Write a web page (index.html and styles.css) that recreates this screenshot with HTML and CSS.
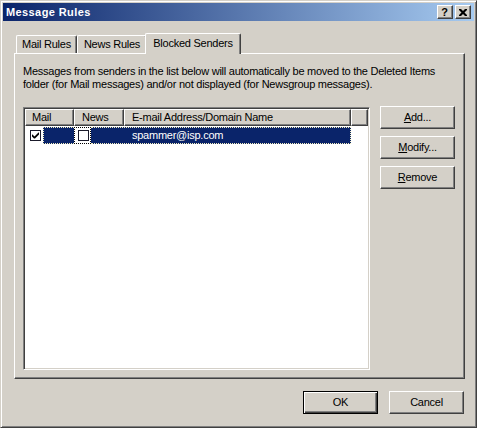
FILE: index.html
```html
<!DOCTYPE html>
<html>
<head>
<meta charset="utf-8">
<title>Message Rules</title>
<link rel="stylesheet" href="styles.css">
</head>
<body>
<div class="window">
  <div class="titlebar">
    <span class="title">Message Rules</span>
    <div class="caption-buttons">
      <div class="cap-btn"><span class="q">?</span></div>
      <div class="cap-btn">
        <svg width="8" height="7" viewBox="0 0 8 7"><path d="M0 0h2l2 2 2-2h2v1L5.5 3.5 8 6v1H6L4 5 2 7H0V6l2.5-2.5L0 1z" fill="#000"/></svg>
      </div>
    </div>
  </div>
  <div class="body">
    <div class="tabs">
      <div class="tab tab-mail">Mail Rules</div>
      <div class="tab tab-news">News Rules</div>
      <div class="tab tab-active">Blocked Senders</div>
    </div>
    <div class="panel">
      <p class="desc">Messages from senders in the list below will automatically be moved to the Deleted Items<br>folder (for Mail messages) and/or not displayed (for Newsgroup messages).</p>
      <div class="panel-main">
        <div class="listview">
          <div class="lv-header">
            <div class="lv-col col-mail">Mail</div>
            <div class="lv-col col-news">News</div>
            <div class="lv-col col-addr">E-mail Address/Domain Name</div>
            <div class="lv-col col-rest"></div>
          </div>
          <div class="lv-row">
            <span class="chk">
              <svg width="9" height="9" viewBox="0 0 9 9"><path d="M1 3.5v2l2 2h1l4-4v-2h-0.5L3.5 5.5 1.5 3.5z" fill="#000"/></svg>
            </span>
            <div class="hl">
              <div class="hl-navy hl-first"></div>
              <div class="hl-white"><span class="chk"></span></div>
              <div class="hl-navy hl-last">spammer@isp.com</div>
            </div>
          </div>
        </div>
        <div class="side-buttons">
          <div class="btn"><u>A</u>dd...</div>
          <div class="btn"><u>M</u>odify...</div>
          <div class="btn"><u>R</u>emove</div>
        </div>
      </div>
    </div>
    <div class="footer">
      <div class="btn btn-default">OK</div>
      <div class="btn">Cancel</div>
    </div>
  </div>
</div>
</body>
</html>
```

FILE: styles.css
```css
* { box-sizing: border-box; }
html, body { margin: 0; padding: 0; background: #d4d0c8; }
body {
  font-family: "Liberation Sans", Arial, sans-serif;
  font-size: 11px;
  letter-spacing: -0.25px;
  color: #000;
}

.window {
  width: 477px;
  height: 428px;
  background: #d4d0c8;
  border: 1px solid;
  border-color: #d4d0c8 #404040 #404040 #d4d0c8;
  box-shadow: inset 1px 1px #fff, inset -1px -1px #808080;
  padding: 2px;
  display: flex;
  flex-direction: column;
}

.titlebar {
  height: 18px;
  flex: none;
  background: linear-gradient(to right, #0a246a, #a6caf0);
  display: flex;
  align-items: center;
  justify-content: space-between;
  padding: 0 3px 0 3px;
}
.title {
  color: #fff;
  font-weight: bold;
  font-size: 11px;
  letter-spacing: 0.4px;
  line-height: 14px;
}
.caption-buttons { display: flex; gap: 2px; }
.cap-btn {
  width: 16px;
  height: 14px;
  background: #d4d0c8;
  border: 1px solid;
  border-color: #fff #404040 #404040 #fff;
  box-shadow: inset -1px -1px #808080;
  display: flex;
  align-items: center;
  justify-content: center;
}
.q {
  font-weight: bold;
  font-size: 11px;
  line-height: 11px;
  letter-spacing: 0;
  margin-right: 1px;
}

.body {
  flex: 1;
  display: flex;
  flex-direction: column;
  padding: 12px 9px 0 11px;
}

.tabs {
  display: flex;
  align-items: flex-end;
  height: 20px;
}
.tab {
  height: 18px;
  background: #d4d0c8;
  border: 1px solid;
  border-bottom: none;
  border-color: #fff #404040 #404040 #fff;
  border-radius: 2px 2px 0 0;
  box-shadow: inset -1px 0 #808080;
  text-align: center;
  line-height: 16px;
  white-space: nowrap;
}
.tab-mail { width: 61px; margin-left: 2px; }
.tab-news { width: 70px; }
.tab-active {
  width: 96px;
  height: 21px;
  margin-left: -2px;
  margin-bottom: -1px;
  padding-top: 1px;
  position: relative;
  z-index: 2;
}

.panel {
  width: 451px;
  height: 326px;
  flex: none;
  border: 1px solid;
  border-color: #fff #404040 #404040 #fff;
  box-shadow: inset -1px -1px #808080;
  padding: 11px 8px 0 8px;
}
.desc {
  margin: 0;
  line-height: 13px;
  white-space: nowrap;
}
.panel-main {
  display: flex;
  align-items: flex-start;
  gap: 10px;
  margin-top: 16px;
}

.listview {
  width: 347px;
  height: 263px;
  background: #fff;
  border: 1px solid;
  border-color: #808080 #fff #fff #808080;
  box-shadow: inset 1px 1px #404040, inset -1px -1px #d4d0c8;
  padding: 1px;
}
.lv-header { display: flex; height: 17px; }
.lv-col {
  height: 17px;
  background: #d4d0c8;
  border: 1px solid;
  border-color: #fff #404040 #404040 #fff;
  box-shadow: inset -1px -1px #808080;
  line-height: 15px;
  padding-left: 6px;
  white-space: nowrap;
  overflow: hidden;
}
.col-mail { width: 49px; }
.col-news { width: 50px; padding-left: 7px; }
.col-addr { width: 227px; padding-left: 7px; }
.col-rest { width: 17px; }

.lv-row {
  display: flex;
  align-items: center;
  height: 17px;
  margin-top: 1px;
  padding-left: 5px;
}
.chk {
  width: 11px;
  height: 11px;
  flex: none;
  background: #fff;
  border: 1px solid #1a1a2a;
  display: flex;
  align-items: center;
  justify-content: center;
}
.hl {
  display: flex;
  height: 17px;
  width: 308px;
  margin-left: 2px;
}
.hl-navy {
  background: #0a246a;
  border-top: 1px dotted #f4f0c0;
  border-bottom: 1px dotted #f4f0c0;
  color: #fff;
  line-height: 15px;
  white-space: nowrap;
}
.hl-first { width: 31px; border-left: 1px dotted #f4f0c0; }
.hl-last { flex: 1; padding-left: 41px; border-right: 1px dotted #f4f0c0; }
.hl-white {
  width: 17px;
  background: #fff;
  border: 1px dotted #000;
  display: flex;
  align-items: center;
  padding-left: 3px;
}

.side-buttons {
  display: flex;
  flex-direction: column;
  gap: 7px;
  margin-top: -1px;
}
.btn {
  width: 75px;
  height: 23px;
  background: #d4d0c8;
  border: 1px solid;
  border-color: #fff #404040 #404040 #fff;
  box-shadow: inset -1px -1px #808080;
  text-align: center;
  line-height: 20px;
  white-space: nowrap;
}
.btn-default {
  border-color: #000;
  box-shadow: inset 1px 1px #fff, inset -1px -1px #404040, inset -2px -2px #808080;
}

.footer {
  display: flex;
  justify-content: flex-end;
  gap: 11px;
  margin-top: 12px;
  padding-right: 1px;
}
```
